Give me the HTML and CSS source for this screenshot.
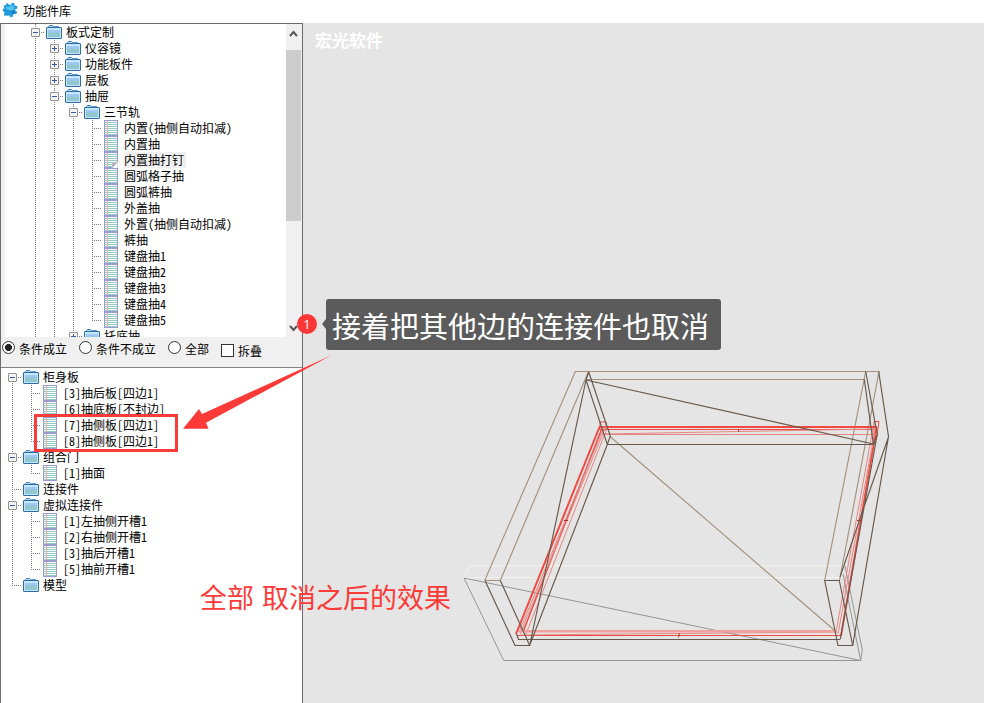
FILE: index.html
```
<!DOCTYPE html>
<html lang="zh-CN">
<head>
    <meta charset="UTF-8">
    <meta name="viewport" content="width=device-width, initial-scale=1.0">
    <title>功能件库</title>
    <link rel="stylesheet" href="styles.css">
</head>
<body>
    <svg class="defs" width="0" height="0">
        <symbol id="folder" viewBox="0 0 16 14">
            <path d="M2.500 3V1.500l1-1h3l1 1V3" fill="#b5dcf5" stroke="#3a76ad"/>
            <path d="M7.500 2.500l1-1h4l1 1" fill="#b5dcf5" stroke="#5b97c8"/>
            <rect x=".5" y="2.5" width="15" height="11" rx=".5" fill="#c3e6fb" stroke="#2f6ca5"/>
            <rect x="2" y="5" width="12" height="7" fill="#93c7cf"/>
            <rect x="2" y="5" width="12" height="2.5" fill="#a0c8f4"/>
        </symbol>
        <symbol id="sheet" viewBox="0 0 14 16">
            <rect width="14" height="16" fill="#9c99cf"/>
            <rect x="1" y="1" width="12" height="14" fill="#fff"/>
            <path d="M1 2.500h12M1 4.500h12M1 6.500h12M1 8.500h12M1 10.500h12M1 12.500h12M1 14.500h12" stroke="#92cbc5"/>
            <path d="M3.500 1v14" stroke="#f9aaa5"/>
        </symbol>
    </svg>

    <div class="header">
        <svg class="logo" width="16" height="16" viewBox="0 0 16 16">
            <path d="M1.500 3l2.500.5C3.500 1 6.500.500 7 3l2.500-.800L10 .800l2.200.200.300 2.500 2.500.500.500 2.500-2.500.800.700 1.700 1.300.500-.500 2.500-2.700.300-1 .700.200 1.500-2.500 1-.800-2-2.500.300-1.200-.300-1.500.500-.500-2.500 1-1C.500 9.500-.500 6.500 2.500 6.500z" fill="#2099da"/>
            <path d="M4 4.500l3 .5 3-2.500 1 2 2 .5-1.500 2.500-3 1-4-1z" fill="#55c5ee"/>
            <path d="M9 10l3-1 .5 2-2 .5z" fill="#126fb7"/>
        </svg>
        <div class="title">功能件库</div>
    </div>

    <div class="main">
        <div class="sidebar">
            <div class="library">
                <div class="tree library-tree">
                    <div class="row"><i class="g minus"></i><svg class="folder"><use href="#folder"/></svg><span>板式定制</span></div>
                    <div class="row"><i class="g"></i><i class="g plus"></i><svg class="folder"><use href="#folder"/></svg><span>仪容镜</span></div>
                    <div class="row"><i class="g"></i><i class="g plus"></i><svg class="folder"><use href="#folder"/></svg><span>功能板件</span></div>
                    <div class="row"><i class="g"></i><i class="g plus"></i><svg class="folder"><use href="#folder"/></svg><span>层板</span></div>
                    <div class="row"><i class="g"></i><i class="g minus"></i><svg class="folder"><use href="#folder"/></svg><span>抽屉</span></div>
                    <div class="row"><i class="g"></i><i class="g"></i><i class="g minus"></i><svg class="folder"><use href="#folder"/></svg><span>三节轨</span></div>
                    <div class="row"><i class="g"></i><i class="g"></i><i class="g"></i><i class="g tee"></i><svg class="sheet"><use href="#sheet"/></svg><span>内置(抽侧自动扣减)</span></div>
                    <div class="row"><i class="g"></i><i class="g"></i><i class="g"></i><i class="g tee"></i><svg class="sheet"><use href="#sheet"/></svg><span>内置抽</span></div>
                    <div class="row"><i class="g"></i><i class="g"></i><i class="g"></i><i class="g tee"></i><svg class="sheet" viewBox="0 0 14 16"><use href="#sheet"/><path d="M8 16v-6h6v6z" fill="#c9c9d6"/><path d="M9 15l4.500-4.500V16H9z" fill="#fff"/><path d="M8.500 15.500v-5h4.500z" fill="#b0afb6"/></svg><span class="selected">内置抽打钉</span></div>
                    <div class="row"><i class="g"></i><i class="g"></i><i class="g"></i><i class="g tee"></i><svg class="sheet"><use href="#sheet"/></svg><span>圆弧格子抽</span></div>
                    <div class="row"><i class="g"></i><i class="g"></i><i class="g"></i><i class="g tee"></i><svg class="sheet"><use href="#sheet"/></svg><span>圆弧裤抽</span></div>
                    <div class="row"><i class="g"></i><i class="g"></i><i class="g"></i><i class="g tee"></i><svg class="sheet"><use href="#sheet"/></svg><span>外盖抽</span></div>
                    <div class="row"><i class="g"></i><i class="g"></i><i class="g"></i><i class="g tee"></i><svg class="sheet"><use href="#sheet"/></svg><span>外置(抽侧自动扣减)</span></div>
                    <div class="row"><i class="g"></i><i class="g"></i><i class="g"></i><i class="g tee"></i><svg class="sheet"><use href="#sheet"/></svg><span>裤抽</span></div>
                    <div class="row"><i class="g"></i><i class="g"></i><i class="g"></i><i class="g tee"></i><svg class="sheet"><use href="#sheet"/></svg><span>键盘抽1</span></div>
                    <div class="row"><i class="g"></i><i class="g"></i><i class="g"></i><i class="g tee"></i><svg class="sheet"><use href="#sheet"/></svg><span>键盘抽2</span></div>
                    <div class="row"><i class="g"></i><i class="g"></i><i class="g"></i><i class="g tee"></i><svg class="sheet"><use href="#sheet"/></svg><span>键盘抽3</span></div>
                    <div class="row"><i class="g"></i><i class="g"></i><i class="g"></i><i class="g tee"></i><svg class="sheet"><use href="#sheet"/></svg><span>键盘抽4</span></div>
                    <div class="row"><i class="g"></i><i class="g"></i><i class="g"></i><i class="g tee last"></i><svg class="sheet"><use href="#sheet"/></svg><span>键盘抽5</span></div>
                    <div class="row"><i class="g"></i><i class="g"></i><i class="g plus"></i><svg class="folder"><use href="#folder"/></svg><span>托底抽</span></div>
                </div>
                <div class="scrollbar">
                    <svg width="15" height="26" viewBox="0 0 15 26"><path d="M4 12l3.500-4L11 12" fill="none" stroke="#555" stroke-width="2"/></svg>
                    <div class="thumb"></div>
                    <svg class="down" width="15" height="17" viewBox="0 0 15 17"><path d="M4 6l3.500 4L11 6" fill="none" stroke="#555" stroke-width="2"/></svg>
                </div>
            </div>

            <div class="filter">
                <label><i class="radio checked"></i>条件成立</label>
                <label><i class="radio"></i>条件不成立</label>
                <label><i class="radio"></i>全部</label>
                <label class="fold"><i class="check"></i>拆叠</label>
            </div>

            <div class="tree parts-tree">
                <div class="row"><i class="g minus first"></i><svg class="folder"><use href="#folder"/></svg><span>柜身板</span></div>
                <div class="row"><i class="g"></i><i class="g tee"></i><svg class="sheet"><use href="#sheet"/></svg><span>[3]抽后板[四边1]</span></div>
                <div class="row"><i class="g"></i><i class="g tee"></i><svg class="sheet"><use href="#sheet"/></svg><span>[6]抽底板[不封边]</span></div>
                <div class="row"><i class="g"></i><i class="g tee"></i><svg class="sheet"><use href="#sheet"/></svg><span>[7]抽侧板[四边1]</span></div>
                <div class="row"><i class="g"></i><i class="g tee last"></i><svg class="sheet"><use href="#sheet"/></svg><span>[8]抽侧板[四边1]</span></div>
                <div class="row"><i class="g minus"></i><svg class="folder"><use href="#folder"/></svg><span>组合门</span></div>
                <div class="row"><i class="g"></i><i class="g tee last"></i><svg class="sheet"><use href="#sheet"/></svg><span>[1]抽面</span></div>
                <div class="row"><i class="g tee"></i><svg class="folder"><use href="#folder"/></svg><span>连接件</span></div>
                <div class="row"><i class="g minus"></i><svg class="folder"><use href="#folder"/></svg><span>虚拟连接件</span></div>
                <div class="row"><i class="g"></i><i class="g tee"></i><svg class="sheet"><use href="#sheet"/></svg><span>[1]左抽侧开槽1</span></div>
                <div class="row"><i class="g"></i><i class="g tee"></i><svg class="sheet"><use href="#sheet"/></svg><span>[2]右抽侧开槽1</span></div>
                <div class="row"><i class="g"></i><i class="g tee"></i><svg class="sheet"><use href="#sheet"/></svg><span>[3]抽后开槽1</span></div>
                <div class="row"><i class="g"></i><i class="g tee last"></i><svg class="sheet"><use href="#sheet"/></svg><span>[5]抽前开槽1</span></div>
                <div class="row"><i class="g tee last"></i><svg class="folder"><use href="#folder"/></svg><span>模型</span></div>
            </div>
        </div>

        <div class="viewport">
            <div class="watermark">宏光软件</div>
            <svg class="scene" viewBox="303 63 681 640" fill="none">
                <!-- drawer front -->
                <g stroke="#f3f3ee">
                    <path d="M464 577.500H843M464 578l5-12"/>
                    <path d="M469 566H845" stroke="#eeeee9" stroke-width="2"/>
                </g>
                <g stroke="#949696">
                    <path d="M464 578l39.700 82.500h357L464 578M860.700 660.500l1.600-10.500L845 566M860.700 660.500L843 574"/>
                </g>
                <!-- light edges -->
                <g stroke="#a39280" stroke-width="1.150">
                    <path d="M484.700 580.500L575.300 371.500H879L839.500 580.500M500.300 580.500L588.500 371.500M586 379.500H865M865.700 371.500L824.700 580.500M610 436.500L837 632.500M484.700 580.500h15.600"/>
                </g>
                <!-- connectors -->
                <g stroke="#f04a42">
                    <path d="M599.500 427L516 634" stroke-width="2"/>
                    <path d="M601.500 429.500L523 632" stroke-width="1.500"/>
                    <path d="M599 427h278" stroke-width="1.800"/>
                    <path d="M601 429.500h273M600 422h6v8h-6zM517 635.500h324M874 421.500h5l-2 14h-3z"/>
                    <path d="M876.500 428L841 636" stroke-width="1.800"/>
                </g>
                <g stroke="#e58580">
                    <path d="M603 434.500h274M603 434l273-5M519 632L604 427M526 634L606 431M520 634L606 426M873 428L836 632M875 430L838 634M520 635l316-3"/>
                    <path d="M519 631.300h318" stroke-width="2.500" stroke="#f2a09c"/>
                </g>
                <path d="M738.500 429v2.500M679.500 633.500l-1 4M564 520.500h4M857 520.500h4" stroke="#a82d20"/>
                <!-- dark edges -->
                <g stroke="#66594c" stroke-width="1.150">
                    <path d="M588.700 372l21.600 64-3 8.500L529.700 645.300M588.700 372l-2.700 8 21.300 64.500h266M586 380l287.500 64M586 380L529.700 645.300"/>
                    <path d="M485 580.500l30 65h14.700L500.300 580.500M516.500 634l2 5.500H840"/>
                    <path d="M865.700 371.500l11.500 63-37 205M864.300 379.500l9 64M878.700 371.500l9.800 65L852.700 645.500M888.500 437L864 507 840 577"/>
                    <path d="M824.700 580.500h14.600l13.400 65H838zM873.500 444.500l3.500-9"/>
                </g>
            </svg>
        </div>
    </div>

    <!-- notes over the window -->
    <div class="frame"></div>
    <svg class="arrow" width="150" height="76" viewBox="182 354 150 76">
        <path d="M183 428.700L199 409l3 5L331.500 355.300L206 422.700l2.600 6z" fill="#fc3b39"/>
    </svg>
    <div class="badge">1</div>
    <div class="tip">接着把其他边的连接件也取消</div>
    <div class="note">全部 取消之后的效果</div>
</body>
</html>
```
FILE: styles.css
```
body {
    font-family: "Noto Sans CJK SC", "Liberation Sans", sans-serif;
    margin: 0;
    width: 984px;
    height: 703px;
    overflow: hidden;
    position: relative;
    background-color: #fff;
    color: #000;
    font-size: 12px;
}

.defs {
    position: absolute;
}

.header {
    height: 23px;
    display: flex;
    align-items: center;
    gap: 5px;
    padding: 0 0 2px 2px;
    box-sizing: border-box;
}

.logo {
    margin-bottom: 1px;
}

.main {
    display: flex;
    height: 680px;
}

.sidebar {
    width: 303px;
    box-sizing: border-box;
    border: 1px solid #6b6b6f;
    border-bottom: none;
    display: flex;
    flex-direction: column;
}

.library {
    display: flex;
    height: 313px;
    background-color: #f0f0f0;
}

.tree {
    background-color: #fff;
    overflow: hidden;
}

.library-tree {
    margin-left: 4px;
    width: 260px;
    padding-left: 21px;
}

.parts-tree {
    flex: 1;
    border-top: 1px solid #83838b;
    padding: 1px 0 0 2px;
}

.row {
    display: flex;
    height: 16px;
    line-height: 16px;
    white-space: nowrap;
    font-feature-settings: "hwid";
}

/* tree guide cell: dotted line down the middle */
.g {
    position: relative;
    width: 19px;
    height: 16px;
    flex: none;
    background: repeating-linear-gradient(#808080 0 1px, transparent 1px 2px) 9px 0 / 1px 16px no-repeat;
}

.tee, .plus, .minus {
    background:
        repeating-linear-gradient(#808080 0 1px, transparent 1px 2px) 9px 0 / 1px 16px no-repeat,
        repeating-linear-gradient(90deg, #808080 0 1px, transparent 1px 2px) 9px 8px / 10px 1px no-repeat;
}

.last {
    background-size: 1px 9px, 10px 1px;
}

.first {
    background-position: 9px 8px, 9px 8px;
}

.plus::before, .minus::before {
    content: "";
    position: absolute;
    left: 5px;
    top: 4px;
    width: 7px;
    height: 7px;
    border: 1px solid #919191;
    border-radius: 1px;
    background: linear-gradient(#4058a8, #4058a8) 1px 3px / 5px 1px no-repeat, #f4f4f4;
}

.plus::before {
    background:
        linear-gradient(#4058a8, #4058a8) 1px 3px / 5px 1px no-repeat,
        linear-gradient(#4058a8, #4058a8) 3px 1px / 1px 5px no-repeat,
        #f4f4f4;
}

.folder {
    width: 16px;
    height: 14px;
    flex: none;
    margin: 1px 4px 0 1px;
}

.sheet {
    width: 14px;
    height: 16px;
    flex: none;
    margin: 0 6px 0 2px;
}

.selected {
    background-color: #f0f0f0;
    padding-right: 2px;
}

.scrollbar {
    width: 15px;
    display: flex;
    flex-direction: column;
}

.thumb {
    height: 171px;
    background-color: #cdcdcd;
}

.down {
    margin-top: auto;
}

.filter {
    height: 30px;
    background-color: #f0f0f0;
    display: flex;
    padding-left: 1px;
    line-height: 23px;
}

.filter label {
    display: flex;
    margin-right: 12px;
}

.radio {
    width: 11px;
    height: 11px;
    border: 1px solid #333;
    border-radius: 50%;
    background-color: #fff;
    margin: 4px 4px 0 0;
}

.checked {
    background: radial-gradient(circle, #222 3.2px, #fff 3.8px);
}

.check {
    width: 11px;
    height: 11px;
    border: 1px solid #333;
    background-color: #fff;
    margin: 7px 4px 0 0;
}

.filter .fold {
    line-height: 27px;
    margin-right: 0;
}

.viewport {
    flex: 1;
    background-color: #e5e5e5;
}

.watermark {
    height: 40px;
    line-height: 34px;
    padding-left: 12px;
    font-size: 17px;
    font-weight: bold;
    color: #fff;
}

.scene {
    display: block;
    width: 681px;
    height: 640px;
}

.frame {
    position: absolute;
    left: 34px;
    top: 414px;
    width: 138px;
    height: 32px;
    border: 3px solid #fa3c3a;
}

.arrow {
    position: absolute;
    left: 182px;
    top: 354px;
}

.badge {
    position: absolute;
    left: 297px;
    top: 314px;
    width: 20px;
    height: 20px;
    line-height: 20px;
    border-radius: 50%;
    background-color: #fb3636;
    color: #fff;
    font-family: "Open Sans", sans-serif;
    font-size: 13px;
    text-align: center;
}

.tip {
    position: absolute;
    left: 326px;
    top: 299px;
    width: 389px;
    height: 51px;
    line-height: 52px;
    padding-left: 6px;
    border-radius: 3px;
    background-color: #5b5b5b;
    color: #fff;
    font-size: 29px;
    white-space: nowrap;
}

.tip::before {
    content: "";
    position: absolute;
    left: -4px;
    top: 20px;
    border: 5px solid transparent;
    border-left: none;
    border-right: 4px solid #5b5b5b;
}

.note {
    position: absolute;
    left: 200px;
    top: 577px;
    line-height: 40px;
    font-size: 27px;
    word-spacing: 2px;
    color: #fc3b39;
    white-space: nowrap;
}
```
